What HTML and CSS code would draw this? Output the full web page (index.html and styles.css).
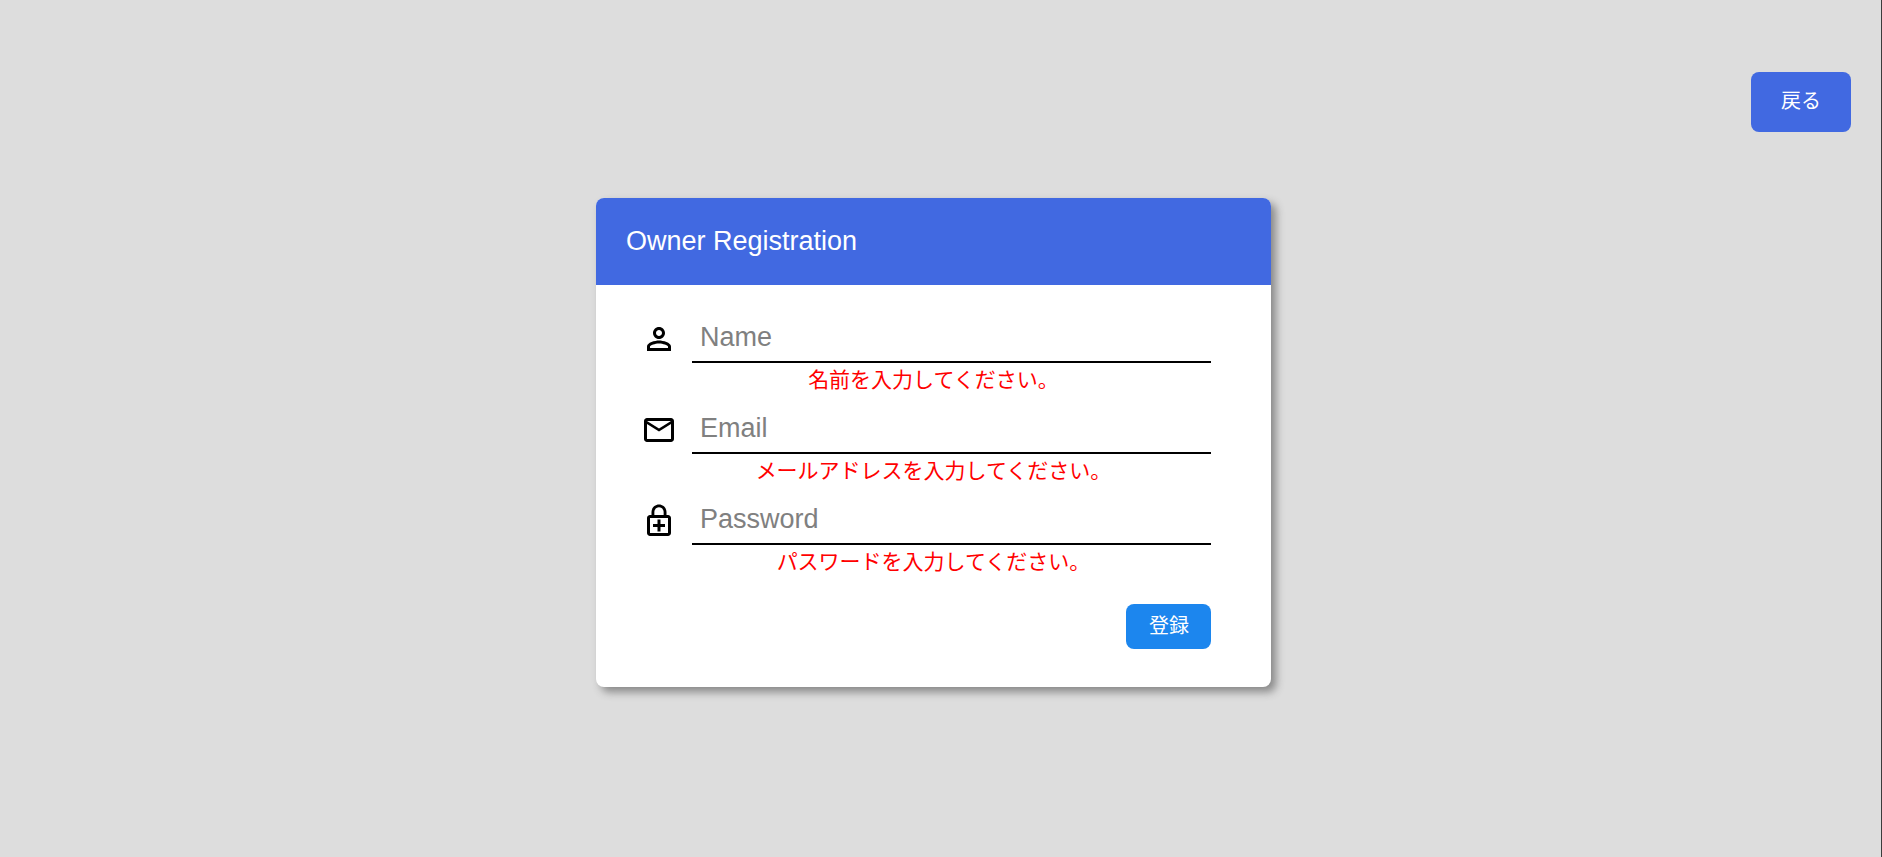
FILE: index.html
```html
<!DOCTYPE html>
<html lang="ja">
<head>
<meta charset="utf-8">
<title>Owner Registration</title>
<link rel="stylesheet" href="styles.css">
</head>
<body>
<nav class="topbar">
  <button type="button" class="back-button">戻る</button>
</nav>
<main class="content">
  <form class="card" novalidate>
    <h1 class="card-title">Owner Registration</h1>
    <div class="card-body">
      <div class="field">
        <label class="field-icon" for="name" aria-label="Name">
          <svg viewBox="0 0 24 24" aria-hidden="true"><path d="M12 6c1.100 0 2 .9 2 2s-.9 2-2 2-2-.9-2-2 .9-2 2-2m0 9c2.700 0 5.800 1.290 6 2v1H6v-.99c.2-.72 3.300-2.010 6-2.010m0-11C9.790 4 8 5.790 8 8s1.790 4 4 4 4-1.790 4-4-1.790-4-4-4zm0 9c-2.670 0-8 1.340-8 4v3h16v-3c0-2.660-5.330-4-8-4z"/></svg>
        </label>
        <input class="field-input" id="name" type="text" placeholder="Name" aria-describedby="name-error">
      </div>
      <p class="error" id="name-error">名前を入力してください。</p>
      <div class="field">
        <label class="field-icon" for="email" aria-label="Email">
          <svg viewBox="0 0 24 24" aria-hidden="true"><path d="M22 6c0-1.100-.9-2-2-2H4c-1.100 0-2 .9-2 2v12c0 1.100.9 2 2 2h16c1.100 0 2-.9 2-2V6zm-2 0l-8 5-8-5h16zm0 12H4V8l8 5 8-5v10z"/></svg>
        </label>
        <input class="field-input" id="email" type="email" placeholder="Email" aria-describedby="email-error">
      </div>
      <p class="error" id="email-error">メールアドレスを入力してください。</p>
      <div class="field">
        <label class="field-icon" for="password" aria-label="Password">
          <svg viewBox="0 0 24 24" aria-hidden="true"><path d="M18 8h-1V6c0-2.760-2.240-5-5-5S7 3.240 7 6v2H6c-1.100 0-2 .9-2 2v10c0 1.100.9 2 2 2h12c1.100 0 2-.9 2-2V10c0-1.100-.9-2-2-2zM8.900 6c0-1.710 1.390-3.100 3.100-3.100s3.100 1.390 3.100 3.100v2H8.900V6zM18 20H6V10h12v10zm-7-1h2v-3h3v-2h-3v-3h-2v3H8v2h3v3z"/></svg>
        </label>
        <input class="field-input" id="password" type="password" placeholder="Password" aria-describedby="password-error">
      </div>
      <p class="error" id="password-error">パスワードを入力してください。</p>
      <div class="actions">
        <button type="submit" class="submit-button">登録</button>
      </div>
    </div>
  </form>
</main>
</body>
</html>
```
FILE: styles.css
```css
* {
  box-sizing: border-box;
}

body {
  margin: 0;
  min-height: 100vh;
  border-right: 1px solid #3c3c3c;
  background: #ddd;
  font-family: "Liberation Sans", "Noto Sans CJK JP", sans-serif;
}

.topbar {
  display: flex;
  justify-content: flex-end;
  padding: 72px 30px 0;
}

.back-button,
.submit-button {
  border: 0;
  border-radius: 8px;
  color: #fff;
  font-family: inherit;
  font-size: 20px;
  line-height: 30px;
  cursor: pointer;
}

.back-button {
  padding: 14px 30px 16px;
  background: royalblue;
}

.content {
  display: flex;
  justify-content: center;
  padding: 66px 14px 66px 0;
}

.card {
  width: 100%;
  max-width: 675px;
  border-radius: 8px;
  background: #fff;
  box-shadow: 5px 5px 8px #888;
}

.card-title {
  margin: 0;
  padding: 28px 30px 29px;
  border-radius: 8px 8px 0 0;
  background: royalblue;
  color: #fff;
  font-weight: 400;
  font-size: 27px;
  line-height: 30px;
}

.card-body {
  padding: 27px 0 38px;
}

.field {
  display: flex;
  align-items: center;
  gap: 15px;
  padding: 0 60px 0 45px;
}

.field-icon {
  flex: none;
  padding-top: 3px;
}

.field-icon svg {
  display: block;
  width: 36px;
  height: 36px;
}

.field-input {
  flex: 1;
  min-width: 0;
  height: 51px;
  padding: 2px 8px 0;
  border: 0;
  border-bottom: 2px solid #000;
  background: none;
  font-family: inherit;
  font-size: 27px;
}

.field-input::placeholder {
  color: #808080;
}

.error {
  margin: 0;
  padding-bottom: 6px;
  color: red;
  font-size: 21px;
  line-height: 34px;
  text-align: center;
}

.actions {
  display: flex;
  justify-content: flex-end;
  padding: 19px 60px 0;
}

.submit-button {
  padding: 7px 22px 8px 23px;
  background: #1c86ee;
}
```
